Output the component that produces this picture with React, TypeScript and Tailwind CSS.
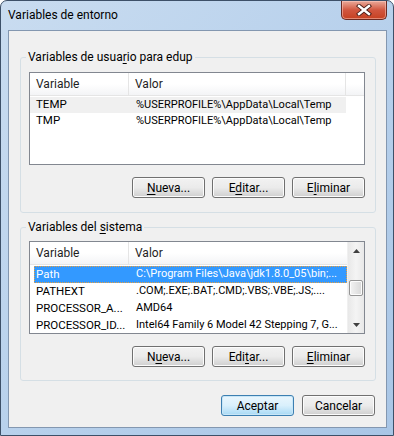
import type { ReactNode } from 'react';

const FONT = 'Roboto, "Noto Sans", "Liberation Sans", sans-serif';

type Row = { name: string; value: string };

const USER_ROWS: Row[] = [
  { name: 'TEMP', value: '%USERPROFILE%\\AppData\\Local\\Temp' },
  { name: 'TMP', value: '%USERPROFILE%\\AppData\\Local\\Temp' },
];

const SYS_ROWS: Row[] = [
  { name: 'Path', value: 'C:\\Program Files\\Java\\jdk1.8.0_05\\bin;...' },
  { name: 'PATHEXT', value: '.COM;.EXE;.BAT;.CMD;.VBS;.VBE;.JS;....' },
  { name: 'PROCESSOR_A...', value: 'AMD64' },
  { name: 'PROCESSOR_ID...', value: 'Intel64 Family 6 Model 42 Stepping 7, G...' },
];

// Win7 push button; mnemonic letter is passed pre-split
function Btn({ children, isDefault = false }: { children: ReactNode; isDefault?: boolean }) {
  return (
    <div
      className={
        'w-[73px] h-[21px] rounded-[3px] border flex items-center justify-center text-[12px] text-black ' +
        (isDefault
          ? 'border-[#3c7fb1] bg-gradient-to-b from-[#eaf6fd] via-[#d9f0fc] to-[#a7d9f5] shadow-[inset_0_0_0_1px_#c8e6f7]'
          : 'border-[#707070] bg-gradient-to-b from-[#f2f2f2] via-[#ebebeb] to-[#cfcfcf] shadow-[inset_0_0_0_1px_#fcfcfc]')
      }
    >
      <span className="leading-none">{children}</span>
    </div>
  );
}

function U({ children }: { children: ReactNode }) {
  return <span className="underline underline-offset-[2px]">{children}</span>;
}

function UserList() {
  return (
    <div className="w-[336px] h-[93px] border border-[#828790] bg-white overflow-hidden">
      <div className="flex h-[23px] bg-gradient-to-b from-white from-50% to-[#f3f4f6] border-b border-[#e5e5e5] text-[12px] text-[#1e1e1e]">
        <div className="w-[99px] shrink-0 pl-[6px] flex items-center border-r border-[#e5e5e5]">Variable</div>
        <div className="w-[217px] shrink-0 pl-[6px] flex items-center border-r border-[#e5e5e5]">Valor</div>
        <div className="flex-1" />
      </div>
      <div className="pt-[1px]">
        {USER_ROWS.map((r, i) => (
          <div
            key={r.name}
            className={'flex h-[16px] w-[316px] items-center text-[11.5px] text-black whitespace-nowrap overflow-hidden ' + (i === 0 ? 'bg-[#f0f0f0]' : '')}
          >
            <div className="w-[100px] shrink-0 pl-[6px]">{r.name}</div>
            <div className="pl-[6px] text-[11px]">{r.value}</div>
          </div>
        ))}
      </div>
    </div>
  );
}

function ScrollBar() {
  return (
    <div className="w-[17px] h-full shrink-0 flex flex-col bg-gradient-to-r from-[#e8e8e8] via-[#f4f4f4] to-[#e8e8e8] border-l border-[#f0f0f0]">
      <div className="h-[17px] flex items-center justify-center">
        <svg width="7" height="4" viewBox="0 0 7 4"><path d="M0 4 L3.5 0 L7 4 Z" fill="#404040" /></svg>
      </div>
      <div className="h-[21px]" />
      <div className="mx-[1px] h-[16px] rounded-[2px] border border-[#959595] bg-gradient-to-r from-[#f3f3f3] to-[#d8d8d8] shadow-[inset_0_0_0_1px_#fcfcfc]" />
      <div className="flex-1" />
      <div className="h-[17px] flex items-center justify-center">
        <svg width="7" height="4" viewBox="0 0 7 4"><path d="M0 0 L3.5 4 L7 0 Z" fill="#404040" /></svg>
      </div>
    </div>
  );
}

function SystemList() {
  return (
    <div className="w-[336px] h-[93px] border border-[#828790] bg-white overflow-hidden flex">
      <div className="w-[317px] shrink-0 overflow-hidden">
        <div className="flex h-[23px] bg-gradient-to-b from-white from-50% to-[#f3f4f6] border-b border-[#e5e5e5] text-[12px] text-[#1e1e1e]">
          <div className="w-[99px] shrink-0 pl-[6px] flex items-center border-r border-[#e5e5e5]">Variable</div>
          <div className="flex-1 pl-[6px] flex items-center">Valor</div>
        </div>
        <div className="pt-[1px]">
          {SYS_ROWS.map((r, i) => (
            <div
              key={r.name}
              className={
                'flex h-[17px] items-center text-[11.5px] whitespace-nowrap overflow-hidden ' +
                (i === 0 ? 'ml-[4px] bg-[#3399ff] text-white outline-1 outline-dotted outline-[#e8a040] -outline-offset-1' : 'text-black')
              }
            >
              <div className={'shrink-0 ' + (i === 0 ? 'w-[96px] pl-[2px]' : 'w-[100px] pl-[6px]')}>{r.name}</div>
              <div className="pl-[6px] text-[11px]">{r.value}</div>
            </div>
          ))}
        </div>
      </div>
      <ScrollBar />
    </div>
  );
}

function CloseButton() {
  return (
    <div className="w-[46px] h-[19px] mr-[6px] rounded-b-[5px] border border-t-0 border-[#6b2a22] bg-gradient-to-b from-[#e9a99a] via-[#d1563f] to-[#c6401f] shadow-[inset_0_0_0_1px_rgba(255,210,200,0.5)] flex items-center justify-center">
      <svg width="16" height="12" viewBox="0 0 16 12">
        <path d="M3 2 L13 10 M13 2 L3 10" stroke="#4b1e18" strokeWidth="4.2" strokeLinecap="square" />
        <path d="M3 2 L13 10 M13 2 L3 10" stroke="#ffffff" strokeWidth="2.4" strokeLinecap="square" />
      </svg>
    </div>
  );
}

export default function App() {
  return (
    <div
      className="w-[394px] h-[436px] rounded-t-[7px] border border-[#3d5068] bg-gradient-to-br from-[#c9dcf0] via-[#b8d1ec] to-[#a9c6e6] overflow-hidden"
      style={{ fontFamily: FONT }}
    >
      {/* ── Title bar ── */}
      <div className="flex items-start h-[29px]">
        <span className="pl-[7px] pt-[6px] text-[12px] leading-[16px] text-black">Variables de entorno</span>
        <div className="ml-auto">
          <CloseButton />
        </div>
      </div>

      {/* ── Client area ── */}
      <div className="ml-[7px] w-[379px] h-[398px] border border-[#8397b0] bg-[#f0f0f0] pl-[11px] pr-[10px]">
        <fieldset className="mt-[18px] w-[356px] border border-[#d5dfe5] rounded-[3px] pl-[8px] pr-[10px] pt-[7px] pb-[14px]">
          <legend className="-ml-[3px] px-[2px] text-[12px] leading-[16px] text-black">
            Variables de usua<U>r</U>io para edup
          </legend>
          <UserList />
          <div className="flex justify-end gap-[7px] mt-[12px]">
            <Btn><U>N</U>ueva...</Btn>
            <Btn>E<U>d</U>itar...</Btn>
            <Btn>E<U>l</U>iminar</Btn>
          </div>
        </fieldset>

        <fieldset className="mt-[6px] w-[356px] border border-[#d5dfe5] rounded-[3px] pl-[8px] pr-[10px] pt-[6px] pb-[13px]">
          <legend className="-ml-[3px] px-[2px] text-[12px] leading-[16px] text-black">
            Variables del <U>s</U>istema
          </legend>
          <SystemList />
          <div className="flex justify-end gap-[7px] mt-[12px]">
            <Btn>N<U>u</U>eva...</Btn>
            <Btn>Edi<U>t</U>ar...</Btn>
            <Btn><U>E</U>liminar</Btn>
          </div>
        </fieldset>

        <div className="flex justify-end gap-[8px] mt-[14px] pr-[1px]">
          <Btn isDefault>Aceptar</Btn>
          <Btn>Cancelar</Btn>
        </div>
      </div>
    </div>
  );
}
